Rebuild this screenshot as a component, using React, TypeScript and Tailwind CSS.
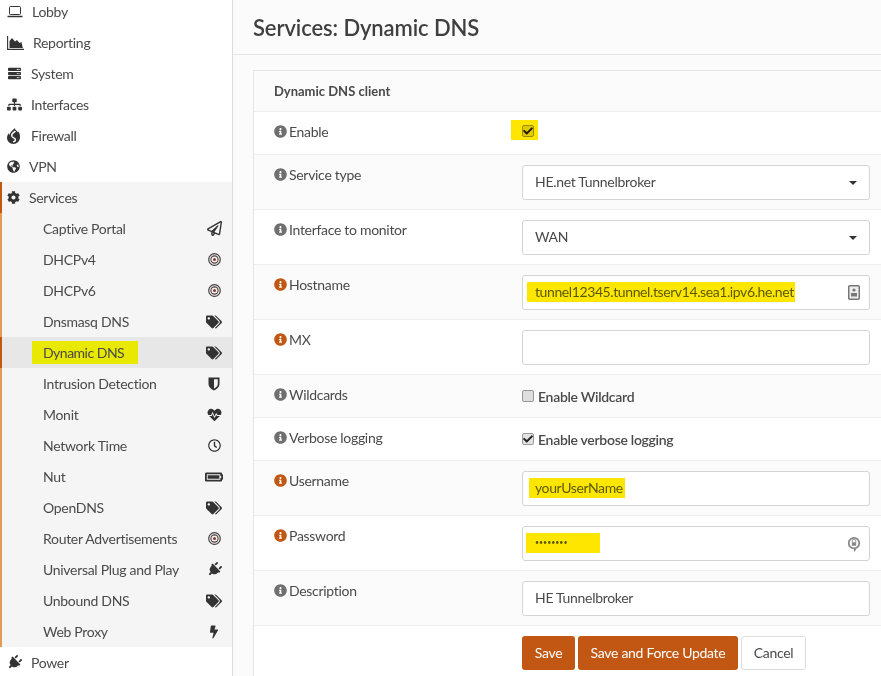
import React from 'react';
import {
  FaBatteryFull,
  FaBolt,
  FaCheck,
  FaCog,
  FaGlobeAmericas,
  FaHeartbeat,
  FaInfoCircle,
  FaPlug,
  FaRegClock,
  FaRegPaperPlane,
  FaServer,
  FaSitemap,
  FaTags,
} from 'react-icons/fa';

const LaptopIcon = () => (
  <svg width="16" height="12" viewBox="0 0 16 12" fill="none" stroke="#333">
    <rect x="2.5" y="0.5" width="11" height="8" rx="1" />
    <path d="M0.5 10.5h15" strokeWidth="1.5" />
  </svg>
);

const ReportingIcon = () => (
  <svg width="17" height="14" viewBox="0 0 17 14">
    <path d="M0.6 0v13.4H17" fill="none" stroke="#333" strokeWidth="1.1" />
    <path d="M2.5 12V5l2.5-3 3 3.5 2-1.5 2.5 3 2-1 1.3 6z" fill="#333" />
  </svg>
);

const FireIcon = () => (
  <svg width="13" height="16" viewBox="0 0 13 16">
    <path d="M7.500 0c.5 2 2.500 2.500 3.500 4.500.2-.5.300-1 .2-1.500C12.500 5 13 7 13 9c0 4-3 7-6.500 7S0 13 0 10c0-2 .8-3.500 2-5 0 1 .3 1.500.8 2C2.800 4 6 2.500 7.500 0z" fill="#333" />
    <path d="M8 3.500C5.500 5 4 6.500 5 8.500c.8 1.500 3.500 1.500 3.500 3.300 0 1-.8 1.700-1.800 2" fill="none" stroke="#fff" strokeWidth="1.500" strokeLinecap="round" />
  </svg>
);

const RingsIcon = () => (
  <svg width="13" height="13" viewBox="0 0 13 13" fill="none" stroke="#4a4040">
    <circle cx="6.500" cy="6.500" r="5.800" strokeWidth="1.200" />
    <circle cx="6.500" cy="6.500" r="3.600" strokeWidth="1.100" />
    <circle cx="6.500" cy="6.500" r="1.500" fill="#8a3a30" stroke="none" />
  </svg>
);

const ShieldIcon = () => (
  <svg width="12" height="14" viewBox="0 0 12 14">
    <path d="M0.500 0.500h11v6.500c0 3-3 5.500-5.500 6.500C3.500 12.500 0.500 10 0.500 7z" fill="#333" />
    <path d="M6 2.200h3.800V7c0 2-2 3.800-3.800 4.700z" fill="#f5f5f5" />
  </svg>
);

const TOP_ITEMS = [
  { label: 'Lobby', icon: <LaptopIcon />, box: 'w-[25px]' },
  { label: 'Reporting', icon: <ReportingIcon />, box: 'w-[26px]' },
  { label: 'System', icon: <FaServer className="w-[15px] h-[13px]" />, box: 'w-[24px]' },
  { label: 'Interfaces', icon: <FaSitemap className="w-[15px] h-[13px]" />, box: 'w-[24px]' },
  { label: 'Firewall', icon: <FireIcon />, box: 'w-[24px]' },
  { label: 'VPN', icon: <FaGlobeAmericas className="w-[13px] h-[13px]" />, box: 'w-[22px]' },
];

const SUB_ITEMS = [
  { label: 'Captive Portal', icon: <FaRegPaperPlane className="w-[15px] h-[15px]" /> },
  { label: 'DHCPv4', icon: <RingsIcon /> },
  { label: 'DHCPv6', icon: <RingsIcon /> },
  { label: 'Dnsmasq DNS', icon: <FaTags className="w-[16px] h-[14px]" /> },
  { label: 'Dynamic DNS', icon: <FaTags className="w-[16px] h-[14px]" />, active: true },
  { label: 'Intrusion Detection', icon: <ShieldIcon /> },
  { label: 'Monit', icon: <FaHeartbeat className="w-[15px] h-[14px]" /> },
  { label: 'Network Time', icon: <FaRegClock className="w-[13px] h-[13px]" /> },
  { label: 'Nut', icon: <FaBatteryFull className="w-[18px] h-[18px]" /> },
  { label: 'OpenDNS', icon: <FaTags className="w-[16px] h-[14px]" /> },
  { label: 'Router Advertisements', icon: <RingsIcon /> },
  { label: 'Universal Plug and Play', icon: <FaPlug className="w-[15px] h-[15px] rotate-45" /> },
  { label: 'Unbound DNS', icon: <FaTags className="w-[16px] h-[14px]" /> },
  { label: 'Web Proxy', icon: <FaBolt className="w-[8px] h-[14px]" /> },
];

const Checkbox = ({ checked }: { checked?: boolean }) => (
  <span className="w-[12px] h-[12px] shrink-0 -mt-[1px] rounded-[2px] border border-[#9a9a9a] bg-[#e2e2e2] flex items-center justify-center mix-blend-multiply">
    {checked && <FaCheck className="w-[10px] h-[10px] text-[#222]" />}
  </span>
);

const Label = ({ text, required }: { text: string; required?: boolean }) => (
  <div className="flex items-center gap-[2px] h-[20px] -mt-[1px]">
    <FaInfoCircle className={`w-[13px] h-[13px] ${required ? 'text-[#c15713]' : 'text-[#6f6f6f]'}`} />
    <span>{text}</span>
  </div>
);

const Field = ({ children, icon }: { children?: React.ReactNode; icon?: React.ReactNode }) => (
  <div className="w-[348px] h-[35px] flex items-center justify-between pl-[12px] pr-[9px] bg-white border border-[#d4d4d4] rounded-[3px]">
    <div className="flex items-center pb-[2px]">{children}</div>
    {icon}
  </div>
);

const Caret = () => <span className="w-0 h-0 mr-[3px] border-x-[4px] border-x-transparent border-t-[4px] border-t-[#333]" />;

const Row = ({ label, required, odd, tall, children }: { label: string; required?: boolean; odd?: boolean; tall?: boolean; children: React.ReactNode }) => (
  <div className={`grid grid-cols-[268px_348px] pl-[20px] border-b border-[#eeeeee] ${odd ? 'bg-[#fbfbfb]' : 'bg-white'} ${tall ? 'h-[55px] pt-[10px]' : 'h-[43px] pt-[10px]'}`}>
    <Label text={label} required={required} />
    <div className="-ml-[20px]">{children}</div>
  </div>
);

const App: React.FC = () => {
  return (
    <div className="w-[881px] h-[676px] overflow-hidden flex bg-[#fbfbfb] text-[14px] tracking-[-0.3px] text-[#4a4a4a] font-['Lato','Noto_Sans',sans-serif]">
      <aside className="w-[233px] shrink-0 bg-white border-r border-[#dcdcdc] -mt-[4px]">
        {TOP_ITEMS.map(item => (
          <div key={item.label} className="h-[31px] pl-[7px] flex items-center">
            <span className={`${item.box} flex items-center text-[#333]`}>{item.icon}</span>
            {item.label}
          </div>
        ))}
        <div className="h-[31px] pl-[5px] flex items-center bg-[#f5f5f5] border-l-2 border-[#c15713]">
          <span className="w-[22px] flex items-center text-[#333]"><FaCog className="w-[13px] h-[13px]" /></span>
          Services
        </div>
        {SUB_ITEMS.map(item => (
          <div
            key={item.label}
            className={`h-[31px] pl-[41px] pr-[8px] flex items-center justify-between border-l-2 ${item.active ? 'bg-[#e7e7e7] border-[#c15713]' : 'bg-[#f5f5f5] border-[#e19b54]'}`}
          >
            {item.active ? (
              <span className="bg-[#e8e800] pl-[11px] pr-[14px] -ml-[11px] py-[1px] tracking-[-0.5px]">{item.label}</span>
            ) : (
              <span>{item.label}</span>
            )}
            <span className="w-[20px] flex justify-center text-[#333]">{item.icon}</span>
          </div>
        ))}
        <div className="h-[31px] pl-[7px] flex items-center">
          <span className="w-[24px] flex items-center text-[#333]"><FaPlug className="w-[15px] h-[15px] rotate-45" /></span>
          Power
        </div>
      </aside>

      <main className="flex-1 min-w-0">
        <header className="h-[55px] pl-[20px] flex items-center bg-[#fbfbfb] border-b border-[#e6e6e6]">
          <h1 className="text-[22px] font-semibold tracking-[-0.1px] text-[#3f3f3f]">Services: Dynamic DNS</h1>
        </header>
        <div className="mt-[15px] ml-[20px] border-l border-t border-[#e6e6e6] bg-white">
          <div className="h-[41px] pl-[20px] pt-[1px] flex items-center font-bold text-[13px] tracking-normal bg-[#fbfbfb] border-b border-[#eeeeee]">Dynamic DNS client</div>
          <Row label="Enable">
            <div className="flex items-center h-[20px] -mt-[2px]">
              <span className="-ml-[11px] w-[27px] h-[20px] bg-[#ffe600] flex items-center justify-start pl-[11px] pt-[2px]"><Checkbox checked /></span>
            </div>
          </Row>
          <Row label="Service type" odd tall>
            <Field icon={<Caret />}>HE.net Tunnelbroker</Field>
          </Row>
          <Row label="Interface to monitor" tall>
            <Field icon={<Caret />}>WAN</Field>
          </Row>
          <Row label="Hostname" required odd tall>
            <Field
              icon={
                <svg width="12" height="15" viewBox="0 0 12 15">
                  <rect x="0.75" y="0.75" width="10.5" height="13.5" rx="1" fill="#eee" stroke="#777" strokeWidth="1.5" />
                  <circle cx="6" cy="5" r="1.6" fill="#777" />
                  <rect x="3" y="8" width="6" height="3.5" fill="#777" />
                </svg>
              }
            >
              <span className="bg-[#ffe600] -ml-[8px] pl-[8px] pr-[1px] h-[20px] flex items-center tracking-[-0.4px] text-[#5a5a00]">tunnel12345.tunnel.tserv14.sea1.ipv6.he.net</span>
            </Field>
          </Row>
          <Row label="MX" required tall>
            <Field />
          </Row>
          <Row label="Wildcards" odd>
            <div className="flex items-center gap-[4px] h-[23px] font-semibold"><Checkbox />Enable Wildcard</div>
          </Row>
          <Row label="Verbose logging">
            <div className="flex items-center gap-[4px] h-[23px] font-semibold"><Checkbox checked />Enable verbose logging</div>
          </Row>
          <Row label="Username" required odd tall>
            <Field><span className="bg-[#ffe600] -ml-[6px] pl-[6px] pr-[2px] h-[20px] flex items-center tracking-[-0.4px] text-[#5a5a00]">yourUserName</span></Field>
          </Row>
          <Row label="Password" required tall>
            <Field
              icon={
                <svg width="14" height="16" viewBox="0 0 16 18" className="-mr-[1px]">
                  <circle cx="8" cy="8" r="6" fill="none" stroke="#888" strokeWidth="2" />
                  <rect x="5.5" y="7" width="5" height="4" fill="#888" />
                  <path d="M6 7V5.5a2 2 0 0 1 4 0V7" fill="none" stroke="#888" />
                  <path d="M8 13l2.5 2.500L8 18z" fill="#888" />
                </svg>
              }
            >
              <span className="bg-[#ffe600] -ml-[9px] pl-[9px] w-[74px] h-[20px] flex items-center text-[#5a5a00] text-[7px] tracking-normal">••••••••</span>
            </Field>
          </Row>
          <Row label="Description" odd tall>
            <Field>HE Tunnelbroker</Field>
          </Row>
          <div className="h-[60px] pl-[268px] pt-[10px] flex gap-[3px]">
            <button className="h-[34px] w-[53px] pb-[1px] bg-[#c15713] text-white rounded-[3px]">Save</button>
            <button className="h-[34px] w-[160px] pb-[1px] bg-[#c15713] text-white rounded-[3px]">Save and Force Update</button>
            <button className="h-[34px] w-[65px] pb-[1px] bg-white border border-[#dddddd] rounded-[3px]">Cancel</button>
          </div>
        </div>
      </main>
    </div>
  );
};

export default App;
